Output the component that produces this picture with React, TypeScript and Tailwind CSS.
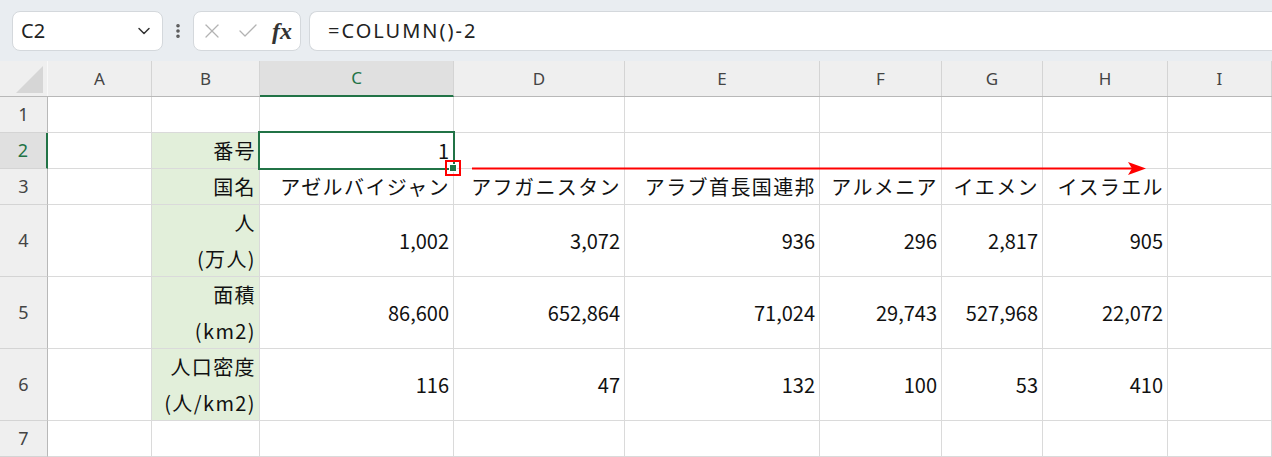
import { ChevronDown, EllipsisVertical, X, Check } from "lucide-react";

const COLS = [
  { key: "A", w: "w-[104px]" },
  { key: "B", w: "w-[108px]" },
  { key: "C", w: "w-[194px]" },
  { key: "D", w: "w-[171px]" },
  { key: "E", w: "w-[195px]" },
  { key: "F", w: "w-[122px]" },
  { key: "G", w: "w-[101px]" },
  { key: "H", w: "w-[125px]" },
  { key: "I", w: "flex-1" },
];

type Row = { n: number; h: string; cells: (string | string[])[] };

const ROWS: Row[] = [
  { n: 1, h: "h-[36px]", cells: ["", "", "", "", "", "", "", "", ""] },
  { n: 2, h: "h-[36px]", cells: ["", "番号", "1", "", "", "", "", "", ""] },
  {
    n: 3,
    h: "h-[36px]",
    cells: ["", "国名", "アゼルバイジャン", "アフガニスタン", "アラブ首長国連邦", "アルメニア", "イエメン", "イスラエル", ""],
  },
  { n: 4, h: "h-[72px]", cells: ["", ["人", "(万人)"], "1,002", "3,072", "936", "296", "2,817", "905", ""] },
  { n: 5, h: "h-[72px]", cells: ["", ["面積", "(km2)"], "86,600", "652,864", "71,024", "29,743", "527,968", "22,072", ""] },
  { n: 6, h: "h-[72px]", cells: ["", ["人口密度", "(人/km2)"], "116", "47", "132", "100", "53", "410", ""] },
  { n: 7, h: "h-[36px]", cells: ["", "", "", "", "", "", "", "", ""] },
];

function FormulaBar() {
  return (
    <div className="flex h-[61px] items-center gap-2 bg-[#e9edf1] pl-3 pt-px">
      <div className="flex h-10 w-[151px] items-center justify-between rounded-lg border border-[#d4d8dc] bg-white pl-2 pr-2">
        <span className="text-[20px] text-[#222] [font-family:'Noto_Sans',sans-serif]">C2</span>
        <ChevronDown size={20} strokeWidth={1.8} className="text-[#333]" />
      </div>
      <EllipsisVertical size={18} strokeWidth={2.8} className="-mx-[2px] text-[#555]" />
      <div className="flex h-10 w-[108px] items-center gap-3 rounded-lg border border-[#d4d8dc] bg-white pl-[6px]">
        <X size={24} strokeWidth={1.3} className="text-[#b3b3b3]" />
        <Check size={24} strokeWidth={1.3} className="text-[#b3b3b3]" />
        <span className="text-[24px] font-bold italic leading-none text-[#333] [font-family:'Liberation_Serif',serif]">fx</span>
      </div>
      <div className="-mr-2 flex h-10 flex-1 items-center rounded-l-lg border border-r-0 border-[#d4d8dc] bg-white pl-[18px]">
        <span className="text-[20px] tracking-[2px] text-[#222] [font-family:'Noto_Sans',sans-serif]">=COLUMN()-2</span>
      </div>
    </div>
  );
}

function HeaderRow() {
  return (
    <div className="flex h-[36px] border-b border-[#b8b8b8] bg-[#efefef] text-[17px] text-[#444] [font-family:'Noto_Sans',sans-serif]">
      <div className="relative w-[48px] shrink-0 border-r border-[#f8f8f8]">
        <div className="absolute bottom-[3px] right-[4px] h-0 w-0 border-b-[27px] border-l-[27px] border-b-[#d6d6d6] border-l-transparent" />
      </div>
      {COLS.map((c) =>
        c.key === "C" ? (
          <div
            key={c.key}
            className={`${c.w} -mb-px flex shrink-0 items-center justify-center border-b-2 border-r border-b-[#217346] border-r-[#d4d4d4] bg-[#e0e0e0] text-[#217346]`}
          >
            {c.key}
          </div>
        ) : (
          <div key={c.key} className={`${c.w} flex shrink-0 items-center justify-center border-r border-[#d4d4d4]`}>
            {c.key}
          </div>
        )
      )}
    </div>
  );
}

function Cell({ value, w, green }: { value: string | string[]; w: string; green: boolean }) {
  const lines = Array.isArray(value) ? value : [value];
  const isText = lines.some((l) => /[^0-9,]/.test(l));
  return (
    <div
      className={`${w} flex shrink-0 flex-col items-end justify-center border-b border-r border-[#dadada] text-[20px] leading-[36px] text-[#111] ${
        green ? "bg-[#e2efda]" : "bg-white"
      } ${isText ? "pr-[3px] tracking-[1.4px]" : "pr-[4px]"}`}
    >
      {lines.map((l, i) => (
        <span key={i} className="whitespace-nowrap">
          {l}
        </span>
      ))}
    </div>
  );
}

export default function App() {
  return (
    <div className="relative h-[457px] w-[1272px] overflow-hidden bg-white">
      <FormulaBar />
      <HeaderRow />
      <div className="[font-family:'Noto_Sans_CJK_JP',sans-serif]">
        {ROWS.map((r) => (
          <div key={r.n} className={`flex ${r.h}`}>
            <div
              className={`flex w-[48px] shrink-0 items-center justify-center border-b border-[#d4d4d4] text-[18px] [font-family:'Noto_Sans',sans-serif] ${
                r.n === 2
                  ? "border-r-2 border-r-[#217346] bg-[#e0e0e0] text-[#217346]"
                  : "border-r border-r-[#b8b8b8] bg-[#efefef] text-[#444]"
              }`}
            >
              {r.n}
            </div>
            {r.cells.map((v, i) => (
              <Cell key={i} value={v} w={COLS[i].w} green={i === 1 && r.n >= 2 && r.n <= 6} />
            ))}
          </div>
        ))}
      </div>

      {/* active cell C2 */}
      <div className="absolute left-[258px] top-[131px] h-[39px] w-[197px] border-2 border-[#217346]" />
      {/* fill handle + highlight box */}
      <div className="absolute left-[445px] top-[160px] h-[16px] w-[16px] border-2 border-[#ff0000]" />
      <div className="absolute left-[449px] top-[164px] h-[8px] w-[8px] border border-white bg-[#217346]" />
      {/* arrow */}
      <svg className="absolute left-[470px] top-[160px]" width="680" height="18" viewBox="0 0 680 18">
        <line x1="2" y1="8.5" x2="662" y2="8.5" stroke="#ff0000" strokeWidth="2" />
        <path d="M658 2 L676 8.5 L658 15 L662 8.5 Z" fill="#ff0000" />
      </svg>
    </div>
  );
}
